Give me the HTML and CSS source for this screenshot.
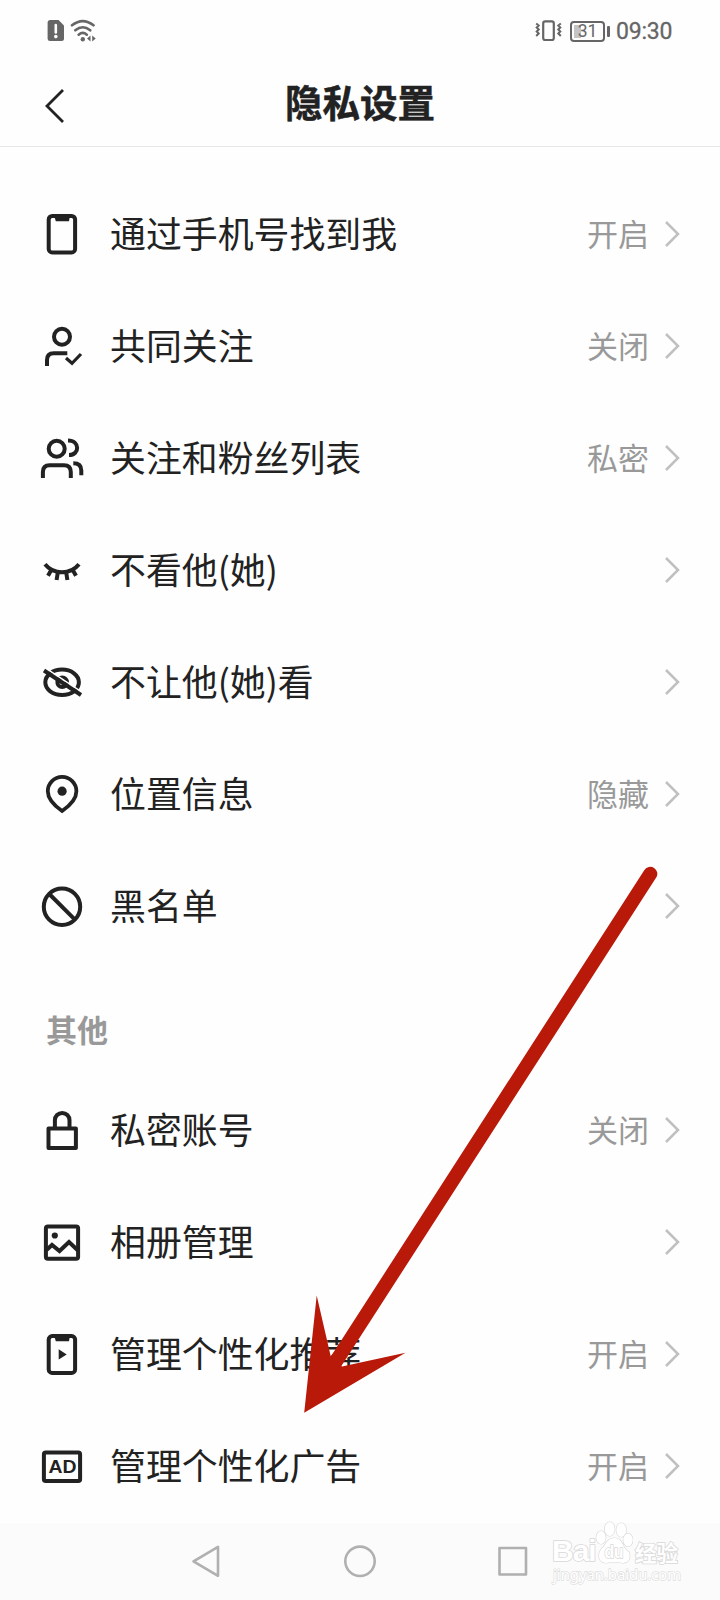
FILE: index.html
```html
<!DOCTYPE html>
<html lang="zh-CN">
<head>
<meta charset="utf-8">
<title>隐私设置</title>
<link rel="stylesheet" href="styles.css">
</head>
<body>
<div class="screen">
  <div class="status">
    <svg class="status-left" width="52" height="24" viewBox="0 0 52 24">
      <path fill="#666" d="M3 1H11.500L17 6.500V19.500Q17 22 14.500 22H3Q.6 22 .6 19.500V3.500Q.6 1 3 1Z"/>
      <path d="M8.800 6V13.500" stroke="#fff" stroke-width="2.600" stroke-linecap="round"/>
      <circle cx="8.800" cy="17.600" r="1.800" fill="#fff"/>
      <g fill="none" stroke="#666" stroke-width="2.600" stroke-linecap="round">
        <path d="M25 6.300Q35.800-2.200 46.500 6.300M28.300 11.300Q35.800 5.200 43.200 11.300M31.700 15.700Q35.800 12.200 39.800 15.700"/>
      </g>
      <circle cx="35.800" cy="20.200" r="2.200" fill="#666"/>
      <path fill="#666" d="M43.500 16.500V22.500L40 19.500ZM45.200 16.500V22.500L48.700 19.500Z"/>
    </svg>
    <div class="status-right">
      <svg width="27" height="22" viewBox="0 0 27 22" fill="none" stroke="#666">
        <rect x="8.200" y="1.400" width="10.600" height="18.600" rx="2" stroke-width="2.200"/>
        <path stroke-width="2" d="M1.200 3.500l2.500 2-2 2 2 2-2 2 2 2-2.500 2.500M25.800 3.500l-2.500 2 2 2-2 2 2 2-2 2 2.500 2.500"/>
      </svg>
      <div class="battery"><span>31</span></div>
      <i class="battery-tip"></i>
      <span class="clock">09:30</span>
    </div>
  </div>
  <header class="header">
    <svg class="back" width="22" height="36" viewBox="0 0 22 36"><path d="M19 2L3 18 19 34" fill="none" stroke="#222" stroke-width="2.800"/></svg>
    <h1>隐私设置</h1>
  </header>

  <main class="list">
    <div class="row">
      <svg class="icon" viewBox="0 0 44 44"><rect x="8.700" y="4" width="26.400" height="36.400" rx="3.500"/><path class="solid" d="M14 3H30L29 9.300H15.800Z"/></svg>
      <span class="label">通过手机号找到我</span><span class="value">开启</span>
      <svg class="chev" viewBox="0 0 16 28"><path d="M2 2L14 14 2 26"/></svg>
    </div>
    <div class="row">
      <svg class="icon" viewBox="0 0 44 44"><circle cx="22" cy="12.700" r="8"/><path d="M7 42V36Q7 29.300 13.700 29.300H27.300"/><path stroke-width="3.200" d="M26 34L32 39.300 41 30"/></svg>
      <span class="label">共同关注</span><span class="value">关闭</span>
      <svg class="chev" viewBox="0 0 16 28"><path d="M2 2L14 14 2 26"/></svg>
    </div>
    <div class="row">
      <svg class="icon" viewBox="0 0 44 44"><circle cx="16.700" cy="12.700" r="8"/><path d="M2.900 42V36Q2.900 29.300 9.600 29.300H24.100Q30.800 29.300 30.800 36V42M28 4.400C40 4.400 40 19 29 19M33.300 27.300Q41.300 27.300 41.300 34.500V39.300"/></svg>
      <span class="label">关注和粉丝列表</span><span class="value">私密</span>
      <svg class="chev" viewBox="0 0 16 28"><path d="M2 2L14 14 2 26"/></svg>
    </div>
    <div class="row">
      <svg class="icon" viewBox="0 0 44 44"><path stroke-width="4" d="M5 16.300Q11.500 24.300 22 24.300T39 16.300M11 22.500L8 27.800M17.700 25L16.600 32M26.300 25L27.400 32M33 22.500L36 27.800"/></svg>
      <span class="label">不看他(她)</span>
      <svg class="chev" viewBox="0 0 16 28"><path d="M2 2L14 14 2 26"/></svg>
    </div>
    <div class="row">
      <svg class="icon" viewBox="0 0 44 44"><ellipse cx="22.100" cy="22.300" rx="16.800" ry="12.700"/><circle cx="22.200" cy="22.300" r="4.800"/><path stroke="#fff" stroke-width="1.600" d="M6 8.300L43 32.800"/><path d="M4 10.500L41 35"/></svg>
      <span class="label">不让他(她)看</span>
      <svg class="chev" viewBox="0 0 16 28"><path d="M2 2L14 14 2 26"/></svg>
    </div>
    <div class="row">
      <svg class="icon" viewBox="0 0 44 44"><path stroke-width="3.800" d="M22.100 39Q7.800 29 7.800 19.200A14.300 14.300 0 0 1 36.400 19.200Q36.400 29 22.100 39Z"/><circle class="solid" cx="22.100" cy="19.200" r="4.600"/></svg>
      <span class="label">位置信息</span><span class="value">隐藏</span>
      <svg class="chev" viewBox="0 0 16 28"><path d="M2 2L14 14 2 26"/></svg>
    </div>
    <div class="row">
      <svg class="icon" viewBox="0 0 44 44"><circle cx="22" cy="22.700" r="18.200"/><path d="M9.300 10L34.700 35.400"/></svg>
      <span class="label">黑名单</span>
      <svg class="chev" viewBox="0 0 16 28"><path d="M2 2L14 14 2 26"/></svg>
    </div>

    <h2 class="section">其他</h2>

    <div class="row">
      <svg class="icon" viewBox="0 0 44 44"><rect x="8.500" y="20.600" width="27.400" height="19.500" stroke-linejoin="round"/><path d="M14.900 20V12.200A7.300 7.300 0 0 1 29.500 12.200V20"/></svg>
      <span class="label">私密账号</span><span class="value">关闭</span>
      <svg class="chev" viewBox="0 0 16 28"><path d="M2 2L14 14 2 26"/></svg>
    </div>
    <div class="row">
      <svg class="icon" viewBox="0 0 44 44"><rect x="5.900" y="6.600" width="32.200" height="32.200" rx="2"/><circle class="solid" cx="14.800" cy="15.500" r="3.100"/><path d="M6.500 30L12 25 19.500 31 29 22 38 30.500"/></svg>
      <span class="label">相册管理</span>
      <svg class="chev" viewBox="0 0 16 28"><path d="M2 2L14 14 2 26"/></svg>
    </div>
    <div class="row">
      <svg class="icon" viewBox="0 0 44 44"><rect x="8.700" y="4.100" width="26.400" height="36.800" rx="3.500"/><path class="solid" d="M14 3H30L29 9.300H15.800ZM18.700 17.300L26.700 22.400 18.700 27.500Z"/></svg>
      <span class="label">管理个性化推荐</span><span class="value">开启</span>
      <svg class="chev" viewBox="0 0 16 28"><path d="M2 2L14 14 2 26"/></svg>
    </div>
    <div class="row">
      <svg class="icon" viewBox="0 0 44 44"><rect x="3.900" y="8.600" width="36.200" height="28.400" rx="1.800"/><text class="ad" x="8.400" y="29.300" textLength="28" lengthAdjust="spacingAndGlyphs">AD</text></svg>
      <span class="label">管理个性化广告</span><span class="value">开启</span>
      <svg class="chev" viewBox="0 0 16 28"><path d="M2 2L14 14 2 26"/></svg>
    </div>
  </main>

  <nav class="nav">
    <svg width="310" height="36" viewBox="0 0 310 36" fill="none" stroke="#b0b0b0" stroke-width="2.600" stroke-linejoin="round">
      <path d="M1.500 18L26 3.500V32.500Z" transform="translate(0 .3)"/>
      <circle cx="168" cy="18.300" r="14.700"/>
      <rect x="307.500" y="5" width="26.500" height="26.500"/>
    </svg>
  </nav>

  <svg class="arrow" width="720" height="1600" viewBox="0 0 720 1600">
    <path d="M650.300 873.800L335 1363" stroke="#b91908" stroke-width="14" stroke-linecap="round"/>
    <path fill="#b91908" d="M304.200 1412.700L316.700 1295.500L331 1357.500L342 1366.500L405.500 1352.800Z"/>
  </svg>

  <div class="mark">
    <div class="mark-top">
      <span class="mark-name">Bai</span>
      <svg width="38" height="44" viewBox="0 0 38 44">
        <g fill="#fff" stroke="#d8d8d8" stroke-width="1.200">
          <ellipse cx="6" cy="16.500" rx="4.700" ry="6.500"/><ellipse cx="14.700" cy="8" rx="5" ry="7"/><ellipse cx="26.300" cy="9" rx="5" ry="7"/><ellipse cx="33" cy="19" rx="4.700" ry="6.500"/>
          <path d="M19.500 17Q25 17 27.500 23T34 31Q37 41 28 42Q19.500 40 11 42Q2 41 4.500 31Q6 28 9.500 24.500Q13 17 19.500 17Z"/>
        </g>
        <text class="mark-du" x="9.500" y="37" textLength="19" lengthAdjust="spacingAndGlyphs">du</text>
      </svg>
      <span class="mark-cn">经验</span>
    </div>
    <div class="mark-url">jingyan.baidu.com</div>
  </div>
</div>
</body>
</html>
```
FILE: styles.css
```css
* { box-sizing: border-box; }
body {
  margin: 0;
  background: #fefefe;
  color: #222;
  font-family: "Noto Sans CJK SC", sans-serif;
}
.screen {
  position: relative;
  width: 720px;
  height: 1600px;
  overflow: hidden;
  display: flex;
  flex-direction: column;
}
.status {
  height: 62px;
  padding: 0 47px;
  display: flex;
  justify-content: space-between;
  align-items: center;
}
.status-left { margin-top: -1px; }
.status-right { display: flex; align-items: center; color: #666; font-family: Roboto, sans-serif; }
.status-right svg { margin-left: -1px; }
.battery {
  width: 35px;
  height: 21px;
  margin-left: 8px;
  border: 2px solid #666;
  border-radius: 4px;
  background: linear-gradient(#c4c4c4, #c4c4c4) 2px 2px / 7px 13px no-repeat;
  font-size: 17.500px;
  font-weight: 400;
  line-height: 17px;
  display: flex;
  align-items: center;
  justify-content: center;
}
.battery-tip { width: 3px; height: 11px; margin-left: 2px; border-radius: 1px; background: #666; }
.clock { margin: 2px 0 0 6px; width: 57px; font-size: 23px; line-height: 28px; white-space: nowrap; letter-spacing: -.2px; -webkit-text-stroke: .3px #666; }
.header {
  height: 85px;
  padding: 0 44px;
  border-bottom: 1px solid #e8e8e8;
  display: grid;
  grid-template-columns: 22px 1fr 22px;
  align-items: center;
}
.header h1 {
  margin: -7px 0 0;
  text-align: center;
  font-size: 37.500px;
  line-height: 54px;
  font-weight: 700;
  -webkit-text-stroke: .5px #222;
}
.back { margin-top: 4px; }
.list { padding-top: 31px; height: 1376px; flex: none; }
.row {
  height: 112px;
  padding: 0 40px;
  display: flex;
  align-items: center;
}
.icon {
  width: 44px;
  height: 44px;
  fill: none;
  stroke: #222;
  stroke-width: 4;
  flex: none;
}
.icon .solid { fill: #222; stroke: none; }
.icon .ad { fill: #222; stroke: none; font: 700 17.500px "Liberation Sans", sans-serif; }
.label { margin: -5px 0 0 26px; flex: 1; font-size: 35.900px; line-height: 52px; }
.value { margin: -3px 15px 0 0; font-size: 31px; line-height: 46px; color: #999; }
.chev { width: 16px; height: 28px; flex: none; fill: none; stroke: #c0c0c0; stroke-width: 2.500; }
.section {
  height: 112px;
  margin: 0;
  padding: 44px 46px 0;
  font-size: 31px;
  line-height: 46px;
  font-weight: 700;
  color: #999;
}
.nav {
  height: 77px;
  padding: 20px 0 0 192px;
  background: #fbfbfb;
}
.nav svg { display: block; overflow: visible; }
.arrow { position: absolute; left: 0; top: 0; }
.mark {
  position: absolute;
  left: 552px;
  top: 1521px;
  width: 132px;
  color: #fff;
  -webkit-text-stroke: 1.600px #d8d8d8;
  paint-order: stroke fill;
}
.mark-top { display: flex; height: 44px; align-items: flex-end; }
.mark-top svg { flex: none; }
.mark-name { width: 43px; font: 700 30px/28px "Liberation Sans", sans-serif; letter-spacing: -1px; }
.mark-du { fill: #fff; stroke: #d8d8d8; -webkit-text-stroke: 0; stroke-width: 1.400px; font: 700 18px "Liberation Sans", sans-serif; }
.mark-cn { margin: 0 0 2px 2px; font-size: 21.500px; line-height: 23px; font-weight: 700; white-space: nowrap; }
.mark-url { margin-left: 1px; font: 14.800px/18px "Noto Sans", sans-serif; -webkit-text-stroke: 1.400px #dfdfdf; }
```
